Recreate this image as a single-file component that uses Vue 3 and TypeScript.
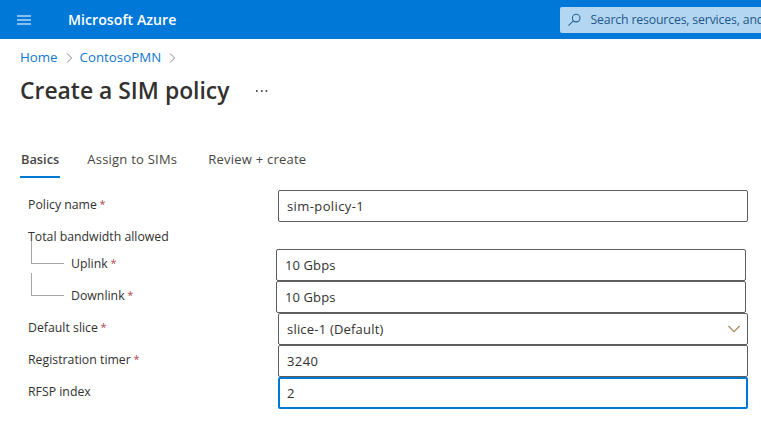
<script setup lang="ts">
interface Field {
  id: string
  label: string
  value: string
  required?: boolean
  nested?: boolean
  select?: boolean
  focused?: boolean
}

const crumbs: string[] = ['Home', 'ContosoPMN']
const tabs: string[] = ['Basics', 'Assign to SIMs', 'Review + create']
const activeTab = 'Basics'

const policy: Field = { id: 'name', label: 'Policy name', value: 'sim-policy-1', required: true }
const fields: Field[] = [
  { id: 'uplink', label: 'Uplink', value: '10 Gbps', required: true, nested: true },
  { id: 'downlink', label: 'Downlink', value: '10 Gbps', required: true, nested: true },
  { id: 'slice', label: 'Default slice', value: 'slice-1 (Default)', required: true, select: true },
  { id: 'timer', label: 'Registration timer', value: '3240', required: true },
  { id: 'rfsp', label: 'RFSP index', value: '2', focused: true },
]
</script>

<template>
  <div class="page">
    <header class="topbar">
      <svg class="burger" width="14" height="10" viewBox="0 0 14 10">
        <path d="M0 0h14v2H0zM0 4h14v2H0zM0 8h14v2H0z" fill="#84bfee" />
      </svg>
      <span class="brand">Microsoft Azure</span>
      <div class="search">
        <svg class="glass" width="14" height="14" viewBox="0 0 14 14" fill="none" stroke="#2a6296" stroke-width="1.1">
          <circle cx="8.2" cy="5.1" r="3.8" />
          <path d="M5.4 7.8L.5 12.6" />
        </svg>
        <span class="search-text">Search resources, services, and</span>
      </div>
    </header>

    <nav class="crumbs">
      <template v-for="c in crumbs" :key="c">
        <a class="crumb">{{ c }}</a>
        <svg class="sep" width="7" height="10" viewBox="0 0 7 10" fill="none" stroke="#8a8886" stroke-width="1">
          <path d="M1 .4L5.6 5L1 9.6" />
        </svg>
      </template>
    </nav>

    <div class="heading">
      <h1>Create a SIM policy</h1>
      <svg class="more" width="12" height="2" viewBox="0 0 12 2" fill="#555">
        <path d="M0 0h1.6v2H0zM5 0h1.6v2H5zM9.6 0h1.6v2H9.6z" />
      </svg>
    </div>

    <div class="tabs">
      <span v-for="t in tabs" :key="t" class="tab" :class="{ active: t === activeTab }">{{ t }}</span>
    </div>

    <main class="form">
      <div class="row">
        <label class="label"><span>{{ policy.label }} <span class="req">*</span></span></label>
        <div class="box">{{ policy.value }}</div>
      </div>
      <div class="group">Total bandwidth allowed</div>
      <div v-for="f in fields" :key="f.id" class="row" :class="{ nested: f.nested }">
        <label class="label">
          <i v-if="f.nested" class="branch"></i>
          <span>{{ f.label }} <span v-if="f.required" class="req">*</span></span>
        </label>
        <div class="box" :class="{ focused: f.focused, select: f.select }">
          <span>{{ f.value }}</span>
          <svg v-if="f.select" class="chevron" width="14" height="8" viewBox="0 0 14 8" fill="none" stroke="#a5875c" stroke-width="1.15">
            <path d="M1.4 1L7 6.6L12.6 1" />
          </svg>
        </div>
      </div>
    </main>
  </div>
</template>

<style>
body {
  margin: 0;
  background: #fff;
}
</style>

<style scoped>
.page {
  width: 761px;
  height: 422px;
  overflow: hidden;
  background: #fff;
  color: #323130;
  font-family: 'Open Sans', 'Noto Sans', sans-serif;
  font-size: 12.3px;
  white-space: nowrap;
}
.topbar {
  display: flex;
  align-items: center;
  height: 39px;
  background: #0078d7;
}
.burger {
  margin-left: 17px;
  flex: none;
}
.brand {
  margin-left: 37px;
  width: 492px;
  flex: none;
  color: #fff;
  font-size: 14.1px;
  font-weight: 600;
  line-height: 20px;
  letter-spacing: 0.05px;
}
.search {
  display: flex;
  align-items: center;
  box-sizing: border-box;
  flex: none;
  width: 201px;
  height: 26px;
  padding-left: 8px;
  border-radius: 2px 0 0 2px;
  background: #b3d7f3;
  color: #1f5687;
  overflow: hidden;
}
.glass {
  flex: none;
}
.search-text {
  margin-left: 8.5px;
  letter-spacing: -0.17px;
}
.crumbs {
  display: flex;
  align-items: center;
  height: 20px;
  padding: 8px 0 0 20px;
}
.crumb {
  color: #0f78cf;
  font-size: 13.3px;
}
.sep {
  margin: 1px 7px 0 8px;
}
.heading {
  display: flex;
  align-items: center;
  height: 34px;
  padding: 7px 0 0 20px;
}
h1 {
  margin: 0;
  width: 236px;
  font-size: 22.9px;
  font-weight: 600;
  line-height: 34px;
  color: #323130;
}
.tabs {
  display: flex;
  gap: 26px;
  height: 36px;
  padding: 34px 0 0 20px;
  color: #484644;
}
.tab {
  box-sizing: border-box;
  height: 36px;
  padding: 0 1px;
  line-height: 35px;
  font-size: 13px;
  letter-spacing: 0.23px;
}
.tab:nth-child(2) {
  margin-right: 3px;
}
.tab.active {
  font-size: 12.8px;
  font-weight: 600;
  letter-spacing: 0;
  border-bottom: 2px solid #0078d4;
}
.form {
  padding: 12px 0 0 28px;
}
.row {
  display: flex;
  width: 720px;
  height: 32px;
}
.label {
  display: flex;
  flex: none;
  width: 250px;
  line-height: 30px;
}
.req {
  margin-left: -0.5px;
  color: #ab4a50;
  font-size: 11px;
  line-height: 1;
  vertical-align: 1px;
}
.box {
  display: flex;
  align-items: center;
  justify-content: space-between;
  box-sizing: border-box;
  width: 470px;
  height: 32px;
  padding: 0 6px 0 8px;
  border: 1px solid #605e5c;
  border-radius: 2px;
  font-size: 13px;
  letter-spacing: 0.4px;
}
.box.select {
  letter-spacing: 0.2px;
}
.box.focused {
  border: 2px solid #0078d4;
  padding-left: 7px;
}
.group {
  height: 27px;
  line-height: 30px;
}
.nested .label {
  width: 248px;
  gap: 7px;
}
.nested .box {
  letter-spacing: 0.1px;
}
.branch {
  box-sizing: border-box;
  flex: none;
  width: 33px;
  height: 23px;
  margin: -8px 0 0 3px;
  border-left: 1px solid #a6a6a6;
  border-bottom: 1px solid #a6a6a6;
}
</style>
